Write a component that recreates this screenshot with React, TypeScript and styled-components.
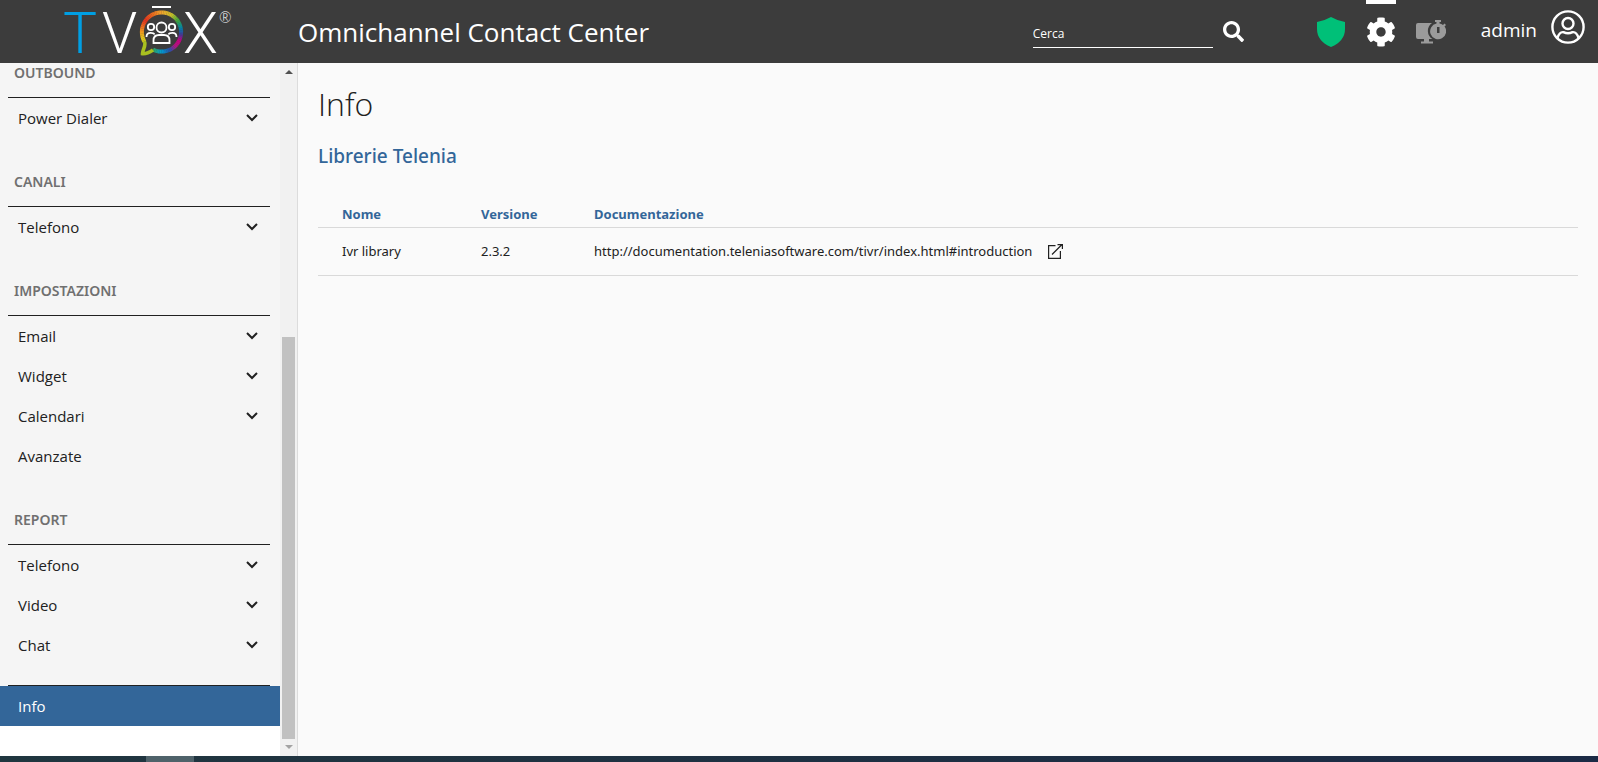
import React from 'react';
import styled, { createGlobalStyle } from 'styled-components';
import { FaSearch, FaCog } from 'react-icons/fa';

const GlobalStyle = createGlobalStyle`
  * { box-sizing: border-box; }
  html, body, #root { height: 100%; }
  body {
    margin: 0;
    font-family: "Segoe UI", "Open Sans", "Noto Sans", sans-serif;
    color: #212121;
    background: #fafafa;
  }
  button, input { font: inherit; color: inherit; }
`;

const Shell = styled.div`
  display: flex;
  flex-direction: column;
  height: 100vh;
`;

const TopBar = styled.header`
  display: flex;
  align-items: center;
  flex: none;
  height: 63px;
  padding: 0 13px 0 58px;
  background: #3c3c3c;
  color: #fff;
`;

const LogoLink = styled.a`
  display: block;
  width: 240px;
  height: 63px;
  svg { display: block; overflow: visible; }
`;

const AppTitle = styled.div`
  flex: 1;
  font-size: 26px;
  line-height: 36px;
  white-space: nowrap;
`;

const SearchForm = styled.form`
  display: flex;
  align-items: center;
  gap: 10px;
  margin-right: 72px;
`;

const SearchInput = styled.input`
  width: 180px;
  height: 32px;
  padding: 4px 0 0;
  border: 0;
  border-bottom: 1px solid #fff;
  border-radius: 0;
  background: transparent;
  font-size: 12px;
  outline: none;
  &::placeholder { color: #fff; opacity: 1; }
`;

const IconButton = styled.button<{ $width: number; $current?: boolean }>`
  display: flex;
  align-items: center;
  justify-content: center;
  width: ${p => p.$width}px;
  height: 63px;
  padding: 0;
  border: 0;
  background: ${p => (p.$current ? 'linear-gradient(#fff, #fff) top / 100% 4px no-repeat' : 'none')};
  cursor: pointer;
`;

const Tools = styled.div`
  display: flex;
  gap: 20px;
  margin-right: 35px;
`;

const UserButton = styled.button`
  display: flex;
  align-items: center;
  gap: 14px;
  height: 63px;
  padding: 0 0 9px;
  border: 0;
  background: none;
  font-size: 19px;
  cursor: pointer;
  span { padding-top: 5px; }
`;

const Body = styled.div`
  display: flex;
  flex: 1;
  min-height: 0;
`;

const Sidebar = styled.aside`
  display: flex;
  flex: none;
  width: 298px;
  border-right: 1px solid #dcdcdc;
  background: #fff;
`;

const Nav = styled.nav`
  display: flex;
  flex-direction: column;
  justify-content: flex-end;
  flex: 1;
  overflow: hidden;
  padding-bottom: 30px;
`;

const NavBody = styled.div`
  flex: none;
  padding-bottom: 21px;
  background: #f5f5f5;
`;

const SectionTitle = styled.h2`
  margin: 0 10px 0 8px;
  padding: 34px 6px 14px;
  border-bottom: 1px solid #212121;
  font-family: "Segoe UI", "Noto Sans", sans-serif;
  font-size: 14px;
  font-weight: 600;
  line-height: 20px;
  color: #707070;
`;

const NavItem = styled.button`
  display: flex;
  align-items: center;
  justify-content: space-between;
  width: 100%;
  height: 40px;
  padding: 0 22px 0 18px;
  border: 0;
  background: none;
  font-size: 15px;
  text-align: left;
  cursor: pointer;
`;

const Divider = styled.hr`
  flex: none;
  width: 262px;
  height: 1px;
  margin: -1px 0 0 8px;
  border: 0;
  background: #212121;
`;

const NavLink = styled.a`
  flex: none;
  padding: 0 18px;
  background: #336699;
  color: #fff;
  font-size: 15px;
  line-height: 40px;
  text-decoration: none;
`;

const ScrollTrack = styled.div`
  display: flex;
  flex-direction: column;
  align-items: center;
  justify-content: space-between;
  flex: none;
  width: 17px;
  padding: 7px 0;
  background: #f1f1f1;
`;

const ScrollThumb = styled.div`
  width: 13px;
  height: 402px;
  margin: auto 0 6px;
  background: #c1c1c1;
`;

const Main = styled.main`
  flex: 1;
  min-width: 0;
  padding: 19px 20px;
`;

const PageTitle = styled.h1`
  margin: 0;
  font-size: 32px;
  font-weight: 300;
  line-height: 44px;
`;

const SubTitle = styled.h2`
  margin: 15px 0 28px;
  font-family: "Segoe UI", "Noto Sans", sans-serif;
  font-size: 19px;
  font-weight: 500;
  line-height: 30px;
  color: #336699;
`;

const Table = styled.table`
  width: 100%;
  border-collapse: collapse;
  font-family: "Segoe UI", "Noto Sans", sans-serif;
  font-size: 13px;
  line-height: 20px;
  text-align: left;
  tr { border-bottom: 1px solid #d9d9d9; }
  th, td { padding: 0; }
  th:first-child, td:first-child { padding-left: 24px; }
`;

const HeadCell = styled.th<{ $width?: number }>`
  width: ${p => (p.$width ? p.$width + 'px' : 'auto')};
  height: 28px;
  && { padding-top: 2px; }
  font-weight: 700;
  color: #336699;
`;

const Cell = styled.td`
  height: 48px;
`;

const DocLink = styled.a`
  display: inline-flex;
  align-items: center;
  gap: 16px;
  color: inherit;
  text-decoration: none;
`;

const Taskbar = styled.footer`
  flex: none;
  height: 6px;
  padding-left: 146px;
  background: linear-gradient(90deg, #20363f, #1b2a45);
`;

const TaskbarItem = styled.div`
  width: 48px;
  height: 6px;
  background: #4f626a;
`;

/* colour stops of the ring, clockwise from twelve o'clock */
const ringStops: [number, number[]][] = [
  [0, [240, 165, 45]],
  [30, [200, 190, 40]],
  [55, [60, 165, 60]],
  [78, [0, 130, 170]],
  [96, [60, 60, 150]],
  [115, [200, 0, 130]],
  [135, [180, 20, 130]],
  [155, [40, 80, 165]],
  [180, [0, 155, 210]],
  [205, [50, 165, 90]],
  [228, [150, 190, 30]],
  [250, [225, 200, 30]],
  [275, [240, 140, 30]],
  [305, [225, 50, 30]],
  [335, [235, 110, 30]],
  [360, [240, 165, 45]],
];

function ringColour(deg: number) {
  const i = Math.max(1, ringStops.findIndex(s => s[0] >= deg));
  const [a, ca] = ringStops[i - 1];
  const [b, cb] = ringStops[i];
  const t = (deg - a) / (b - a);
  return `rgb(${ca.map((v, k) => Math.round(v + (cb[k] - v) * t)).join(',')})`;
}

function point(deg: number, r: number) {
  const rad = (deg * Math.PI) / 180;
  return `${(103.5 + r * Math.sin(rad)).toFixed(2)} ${(32 - r * Math.cos(rad)).toFixed(2)}`;
}

const ringSegments = Array.from({ length: 72 }, (_, i) => i * 5).filter(d => d < 205 || d >= 240);

function Logo() {
  return (
    <svg width="180" height="63" fill="none" stroke="#fff" strokeWidth="1.8">
      <g fontFamily="Roboto, sans-serif" fontSize="57" fontWeight="300" fill="#fff" stroke="none">
        <text x="5" y="53" fill="#009fe3">T</text>
        <text x="44" y="53">V</text>
        <text x="125" y="53">X</text>
        <text x="161" y="23" fontFamily="Lato, sans-serif" fontSize="15" fontWeight="300">®</text>
      </g>
      <path d="M94 7H113" strokeWidth="2" />
      {ringSegments.map(d => (
        <path key={d} d={`M${point(d, 19.6)}A19.6 19.6 0 0 1 ${point(d + 5.6, 19.6)}`} stroke={ringColour(d + 2)} strokeWidth="4" />
      ))}
      <path d="M86.4 41.6C88.5 45 84.5 50 84.5 53.6C88 54 92 52 95 50" stroke="#a9c020" strokeWidth="3.6" />
      <circle cx="103.5" cy="27.5" r="5" />
      <circle cx="93" cy="27" r="3.2" />
      <circle cx="114" cy="27" r="3.2" />
      <path d="M95.5 43V40.5C95.5 36.5 98 35 101 35H106C109 35 111.5 36.5 111.5 40.5V43Z" />
      <path d="M88.5 37C88.5 34 90 32.8 92.5 32.8C94.5 32.8 96 33.2 96.5 34.5M118.5 37C118.5 34 117 32.8 114.5 32.8C112.5 32.8 111 33.2 110.5 34.5" />
    </svg>
  );
}

const Shield = () => (
  <svg width="28" height="30" viewBox="0 0 28 30">
    <path fill="#00c078" d="M14 0Q21 4 28 5V12Q28 24 14 30Q0 24 0 12V5Q7 4 14 0Z" />
  </svg>
);

const MonitorTimer = () => (
  <svg width="30" height="24" viewBox="0 0 30 24" fill="#9b9b9b">
    <path d="M2 3H16A9.5 9.5 0 0 0 16.5 19H2Q0 19 0 17V5Q0 3 2 3ZM8 19H13V21.5H17V23.5H5V21.5H8Z" />
    <path fillRule="evenodd" d="M19 0H25V2H23.5V3.5A8 8 0 0 1 27 5L28.5 3.5L30 5L28.500 6.5A8 8 0 1 1 20.5 3.5V2H19ZM21 7V13H23.5V7Z" />
  </svg>
);

const UserIcon = () => (
  <svg width="34" height="34" viewBox="0 0 34 34" fill="none" stroke="#fff" strokeWidth="2.4">
    <circle cx="17" cy="17" r="15.6" />
    <circle cx="17" cy="13.5" r="5.5" />
    <path d="M6.5 28C8 23 10 21.8 12.5 22.2C15.5 23.6 18.5 23.6 21.5 22.2C24 21.8 26 23 27.5 28" />
  </svg>
);

const Chevron = () => (
  <svg width="12" height="8" viewBox="0 0 12 8" fill="none" stroke="#212121" strokeWidth="2">
    <path d="M1 1L6 6L11 1" />
  </svg>
);

const OpenIcon = () => (
  <svg width="15" height="15" viewBox="0 0 15 15" fill="none" stroke="#212121" strokeWidth="1.2">
    <path d="M7.5 1.6H0.6V14.4H12.4V7M4 10.5L13.5 1M9.5 0.6H14.4V5" />
  </svg>
);

const sections = [
  { title: 'OUTBOUND', items: ['Power Dialer'] },
  { title: 'CANALI', items: ['Telefono'] },
  { title: 'IMPOSTAZIONI', items: ['Email', 'Widget', 'Calendari', 'Avanzate'] },
  { title: 'REPORT', items: ['Telefono', 'Video', 'Chat'] },
];

export default function App() {
  return (
    <Shell>
      <GlobalStyle />
      <TopBar>
        <LogoLink href="#" aria-label="TVOX"><Logo /></LogoLink>
        <AppTitle>Omnichannel Contact Center</AppTitle>
        <SearchForm role="search">
          <SearchInput type="text" placeholder="Cerca" aria-label="Cerca" />
          <IconButton type="button" $width={21} aria-label="Avvia ricerca"><FaSearch size={21} /></IconButton>
        </SearchForm>
        <Tools>
          <IconButton type="button" $width={30} aria-label="Stato"><Shield /></IconButton>
          <IconButton type="button" $width={30} $current aria-label="Configurazione"><FaCog size={30} /></IconButton>
          <IconButton type="button" $width={30} aria-label="Monitor"><MonitorTimer /></IconButton>
        </Tools>
        <UserButton type="button"><span>admin</span><UserIcon /></UserButton>
      </TopBar>
      <Body>
        <Sidebar>
          <Nav>
            <NavBody>
              {sections.map(s => (
                <section key={s.title}>
                  <SectionTitle>{s.title}</SectionTitle>
                  {s.items.map(item => (
                    <NavItem type="button" key={item}>
                      {item}
                      {item !== 'Avanzate' && <Chevron />}
                    </NavItem>
                  ))}
                </section>
              ))}
            </NavBody>
            <Divider />
            <NavLink href="#info">Info</NavLink>
          </Nav>
          <ScrollTrack aria-hidden="true">
            <svg width="8" height="4"><path d="M0 4L4 0L8 4Z" fill="#505050" /></svg>
            <ScrollThumb />
            <svg width="8" height="4"><path d="M0 0L4 4L8 0Z" fill="#a3a3a3" /></svg>
          </ScrollTrack>
        </Sidebar>
        <Main>
          <PageTitle>Info</PageTitle>
          <SubTitle>Librerie Telenia</SubTitle>
          <Table>
            <thead>
              <tr>
                <HeadCell $width={163}>Nome</HeadCell>
                <HeadCell $width={113}>Versione</HeadCell>
                <HeadCell>Documentazione</HeadCell>
              </tr>
            </thead>
            <tbody>
              <tr>
                <Cell>Ivr library</Cell>
                <Cell>2.3.2</Cell>
                <Cell>
                  <DocLink href="#introduction">
                    http://documentation.teleniasoftware.com/tivr/index.html#introduction
                    <OpenIcon />
                  </DocLink>
                </Cell>
              </tr>
            </tbody>
          </Table>
        </Main>
      </Body>
      <Taskbar><TaskbarItem /></Taskbar>
    </Shell>
  );
}
